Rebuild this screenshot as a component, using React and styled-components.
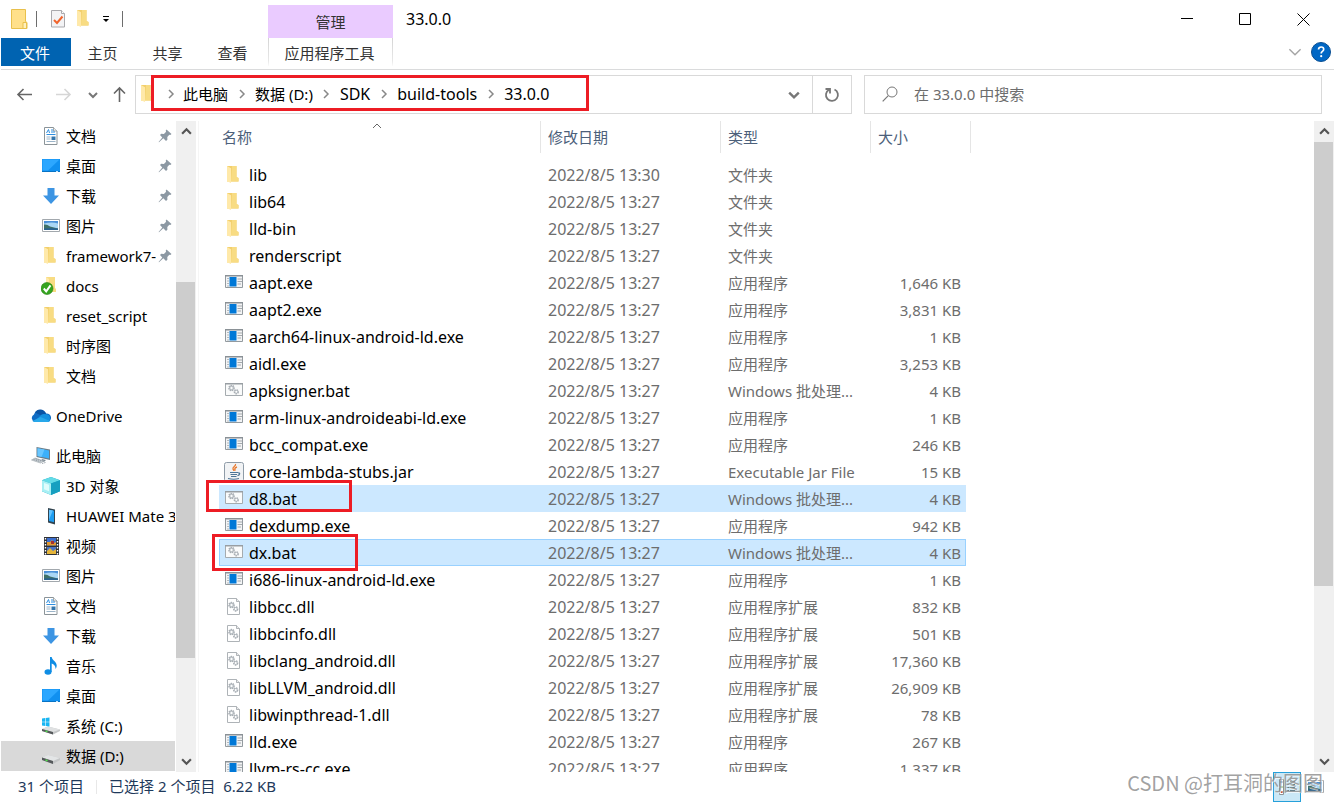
import React from "react";
import styled, { createGlobalStyle } from "styled-components";

const GlobalStyle = createGlobalStyle`
  * {
    box-sizing: border-box;
  }

  body {
    margin: 0;
    background: #fff;
    color: #000;
    font: 15px/20px "Noto Sans", "Noto Sans CJK SC", sans-serif;
  }

  button,
  input {
    font: inherit;
    color: inherit;
  }

  a {
    color: inherit;
    text-decoration: none;
  }

  svg {
    display: block;
    flex: none;
  }
`;

const StyledWindow = styled.div`
  position: relative;
  display: flex;
  flex-direction: column;
  height: 100vh;
  padding: 0 1px;
  overflow: hidden;
`;

const StyledTitleBar = styled.header`
  display: flex;
  height: 38px;
  padding-right: 2px;
`;

const StyledQuickAccess = styled.div`
  display: flex;
  align-items: center;
  width: 267px;
  padding-left: 8px;
`;

const StyledQuickButton = styled.button`
  display: flex;
  align-items: center;
  justify-content: center;
  width: ${(props) => props.$width || 26}px;
  height: 24px;
  padding: 0;
  border: 0;
  background: none;
`;

const StyledQuickDivider = styled.span`
  width: 1px;
  height: 16px;
  margin: 0 8px 0 7px;
  background: #6d6d6d;
`;

const StyledContextGroup = styled.div`
  width: 125px;
  height: 33px;
  margin-top: 5px;
  padding-top: 7px;
  background: #eacbff;
  color: #333;
  text-align: center;
`;

const StyledTitle = styled.h1`
  flex: 1;
  margin: 0;
  padding: 9px 13px;
  font-size: 16px;
  font-weight: 400;
`;

const StyledWindowButton = styled.button`
  display: flex;
  align-items: center;
  justify-content: center;
  width: 58px;
  padding: 0;
  border: 0;
  background: none;
`;

const StyledRibbon = styled.nav`
  display: flex;
  height: 32px;
  padding-bottom: 3px;
  border-bottom: 1px solid #dadbdc;
  color: #333;
`;

const StyledRibbonTab = styled.button`
  width: 65px;
  padding: 2px 2px 0 0;
  border: 0;
  background: none;
  text-align: center;
`;

const StyledFileTab = styled(StyledRibbonTab)`
  width: 70px;
  background: #0063b1;
  color: #fff;
`;

const StyledContextTab = styled(StyledRibbonTab)`
  width: 125px;
  margin-left: 2px;
  border: solid;
  border-width: 0 1px;
  border-image: linear-gradient(#d4d4d4, #e8e8e8 80%, #fff) 1;
`;

const StyledRibbonEnd = styled.div`
  display: flex;
  align-items: center;
  gap: 6px;
  margin-left: auto;
  padding-right: 3px;
`;

const StyledIconButton = styled.button`
  display: flex;
  align-items: center;
  justify-content: center;
  width: ${(props) => props.$width || 20}px;
  height: 100%;
  padding: 0;
  border: 0;
  background: none;
`;

const StyledToolbar = styled.div`
  display: flex;
  height: 51px;
  padding: 5px 12px 7px 3px;
`;

const StyledHistory = styled.div`
  display: flex;
  width: 131px;
`;

const StyledAddress = styled.div`
  display: flex;
  flex: 715;
  border: 1px solid #d9d9d9;
`;

const StyledBreadcrumb = styled.div`
  position: relative;
  display: flex;
  flex: 1;
  align-items: center;
  padding: 0 0 2px 5px;
`;

const StyledCrumb = styled.a`
  font-size: ${(props) => (props.$latin ? 16 : 15)}px;
`;

const StyledChevron = styled.span`
  display: flex;
  justify-content: center;
  width: ${(props) => (props.$first ? 25 : 27)}px;
`;

const StyledMark = styled.span`
  position: absolute;
  z-index: 1;
  border: 3px solid #ed1c24;
  pointer-events: none;
`;

const StyledPathMark = styled(StyledMark)`
  top: -1px;
  left: 15px;
  width: 438px;
  height: 36px;
`;

const StyledRefresh = styled.div`
  width: 39px;
  border-left: 1px solid #d9d9d9;
`;

const StyledSearch = styled.label`
  display: flex;
  flex: 439;
  align-items: center;
  gap: 16px;
  margin-left: 12px;
  padding: 0 0 2px 17px;
  border: 1px solid #d9d9d9;
`;

const StyledSearchInput = styled.input`
  flex: 1;
  min-width: 0;
  padding: 0;
  border: 0;
  outline: 0;
  background: none;

  &::placeholder {
    color: #6d6d6d;
    opacity: 1;
  }
`;

const StyledBody = styled.div`
  display: flex;
  flex: 1;
  min-height: 0;
`;

const StyledSidebar = styled.nav`
  display: flex;
  gap: 1px;
  width: 197px;
  padding-right: 2px;
`;

const StyledTree = styled.ul`
  flex: 1;
  min-width: 0;
  margin: 0;
  padding: 0;
  overflow: hidden;
  list-style: none;
`;

const StyledTreeItem = styled.li`
  margin: ${(props) => (props.$root ? "10px 0 0" : 0)};
  background: ${(props) => (props.$active ? "#d9d9d9" : "none")};
`;

const StyledTreeLink = styled.a`
  display: flex;
  align-items: center;
  gap: 5px;
  height: 30px;
  padding-left: ${(props) => (props.$root ? 30 : 40)}px;
`;

const StyledTreeText = styled.span`
  flex: 1;
  overflow: hidden;
  white-space: nowrap;
`;

const StyledPin = styled.span`
  margin: 0 3px 0 -3px;
`;

const StyledScrollbar = styled.div`
  display: grid;
  grid-template-rows: 21px ${(props) => props.$rows} 20px;
  width: 20px;
  background: #f0f0f0;
`;

const StyledThumb = styled.div`
  grid-row: 3;
  width: 19px;
  background: #cdcdcd;
`;

const StyledScrollButton = styled(StyledIconButton)`
  grid-row: ${(props) => props.$row};
`;

const StyledFiles = styled.main`
  flex: 1;
  min-width: 0;
  padding-left: 20px;
  overflow: hidden;
  border-left: 1px solid #f5f5f5;
`;

const StyledTable = styled.table`
  display: block;
`;

const StyledHead = styled.thead`
  display: block;
  margin-bottom: 8px;
`;

const StyledRows = styled.tbody`
  display: block;
`;

const StyledHeadRow = styled.tr`
  display: grid;
  grid-template-columns: 322px 180px 150px 100px;
`;

const StyledTh = styled.th`
  position: relative;
  height: 32px;
  padding: 6px ${(props) => (props.$name ? 3 : 7)}px;
  border-right: 1px solid #e5e5e5;
  color: #4c607a;
  font-weight: 400;
  text-align: left;
`;

const StyledSort = styled.span`
  position: absolute;
  top: 0;
  left: 153px;
`;

const StyledRow = styled.tr`
  position: relative;
  display: grid;
  grid-template-columns: 322px 180px 150px 95px;
  width: 747px;
  height: 27px;
  background: ${(props) => (props.$selected ? "#cce8ff" : "none")};
  outline: ${(props) => (props.$focused ? "1px solid #99d1ff" : "none")};
  outline-offset: -1px;
`;

const StyledCell = styled.td`
  padding: 4px ${(props) => (props.$size ? 5 : 7)}px 3px;
  color: #6d6d6d;
  font-size: ${(props) => (props.$latin ? 16 : 15)}px;
  text-align: ${(props) => (props.$size ? "right" : "left")};
  white-space: nowrap;
`;

const StyledNameCell = styled.td`
  display: flex;
  gap: 5px;
  padding: 4px 5px 3px;
  font-size: 16px;
  white-space: nowrap;
`;

const StyledRowMark = styled(StyledMark)`
  top: -5px;
  left: ${(props) => (props.$focused ? -7 : -13)}px;
  width: 146px;
  height: ${(props) => (props.$focused ? 37 : 32)}px;
`;

const StyledStatus = styled.footer`
  display: flex;
  align-items: center;
  height: 30px;
  padding: 0 9px 0 17px;
  color: #1e395b;
`;

const StyledStatusText = styled.span`
  padding-bottom: 2px;
`;

const StyledStatusDivider = styled.span`
  width: 1px;
  height: 14px;
  margin: 0 12px;
  background: #e8e8e8;
`;

const StyledViews = styled.div`
  display: flex;
  gap: 4px;
  height: 30px;
  margin-left: auto;
`;

const StyledViewButton = styled(StyledIconButton)`
  width: ${(props) => (props.$active ? 28 : 20)}px;
  border: ${(props) => (props.$active ? "1px solid #26a0da" : "0")};
  background: ${(props) => (props.$active ? "#cbe8f6" : "none")};
`;

const StyledWatermark = styled.span`
  position: absolute;
  right: 12px;
  bottom: 7px;
  color: rgba(145, 145, 145, 0.85);
  font: 20px/24px "Noto Sans CJK SC", sans-serif;
  text-shadow: 1px 1px 0 rgba(255, 255, 255, 0.7);
  pointer-events: none;
`;

const Caret = ({ dir = "down", size = 10, color = "#555", weight = 2 }) => {
  const points = {
    down: "1,3 5,7 9,3",
    up: "1,7 5,3 9,7",
    right: "3,1 7,5 3,9",
  };
  return (
    <svg width={size} height={size} viewBox="0 0 10 10">
      <polyline
        points={points[dir]}
        fill="none"
        stroke={color}
        strokeWidth={weight}
      />
    </svg>
  );
};

const Arrow = ({ turn = 0, color = "#666" }) => (
  <svg width="17" height="17" viewBox="0 0 17 17">
    <path
      d="M16 8.500H2M7.500 3L2 8.500L7.500 14"
      transform={`rotate(${turn} 8.5 8.5)`}
      fill="none"
      stroke={color}
      strokeWidth="1.600"
    />
  </svg>
);

const Gear = ({ x, y, r }) => (
  <g>
    <circle
      cx={x}
      cy={y}
      r={r}
      fill="#d8dce0"
      stroke="#a9afb5"
      strokeWidth="1.400"
      strokeDasharray="1.400 0.800"
    />
    <circle cx={x} cy={y} r={r - 0.6} fill="#cdd2d6" stroke="#a5abb0" strokeWidth="0.600" />
    <circle cx={x} cy={y} r="1" fill="#fff" />
  </g>
);

const drawings = {
  folder: (
    <>
      <path d="M3 1h9.500v11l2 1v3.500H3z" fill="#f2cf6c" />
      <path d="M8 1h4.500v11l2 1v3.500H7z" fill="#f8dc83" />
      <path d="M3 1l4 2.200V18l-4-1.700z" fill="#ffe9a9" />
    </>
  ),
  synced: (
    <>
      <path d="M5 1h9v11l1 1v3H5z" fill="#f8dc83" />
      <path d="M5 1l3 2v14l-3-1z" fill="#ffe9a9" />
      <circle cx="6" cy="12.500" r="6" fill="#36a420" stroke="#23820f" strokeWidth="0.600" />
      <path d="M2.800 12.500l2.400 2.800L9.500 9.300" fill="none" stroke="#fff" strokeWidth="2" />
    </>
  ),
  doc: (
    <>
      <path d="M3.500 1.500h9l3.500 3.500v13.500H3.500z" fill="#fff" stroke="#8b9499" />
      <path d="M12.500 1.500V5H16" fill="#eee" stroke="#8b9499" strokeWidth="0.800" />
      <path d="M5.500 7l2-3.500L8.500 7M10 4h2M10 6h4M5.500 8.500h9" fill="none" stroke="#2d8ee0" />
      <path d="M5.500 11h4M5.500 13h4M5.500 15.500h9" stroke="#9cb5c9" />
      <path d="M10.500 10.500h4V14h-4z" fill="#3476ac" />
    </>
  ),
  desktop: (
    <>
      <path d="M1 3h18v13H1z" fill="#1090f0" />
      <path d="M1.500 3.500h17L7 14.500H1.500z" fill="#2ca7ff" />
      <path d="M1 15h18v1H1z" fill="#0873c4" />
      <path d="M15 15.500h2" stroke="#bfe4ff" />
    </>
  ),
  download: <path d="M6.500 2h7v7.500H18L10 18 2 9.500h4.500z" fill="#3d95e3" />,
  picture: (
    <>
      <path d="M1.500 3.500h17v12h-17z" fill="#fff" stroke="#a2a8ad" />
      <path d="M3 5h14v9H3z" fill="#a9d6f5" />
      <path d="M3 5h14v2.500q-6-2-14 0z" fill="#4a90d8" />
      <path d="M3 8.500q3-.5 6 2l8 2V14H3z" fill="#3f7168" />
      <path d="M3 12.500q6-1 14 0V14H3z" fill="#2a638f" />
    </>
  ),
  cloud: (
    <>
      <path d="M4 16A4 4 0 0 1 3 8.500 6.500 6.500 0 0 1 15 7.500 4 4 0 0 1 16.500 16z" fill="#0f6cc4" />
      <path d="M4 6.500a6 6 0 0 1 11 1.500l-5 1.500z" fill="#0a54a5" />
      <path d="M3 16l7-7q2-1.500 5-.7a4 4 0 0 1 1.500 7.700z" fill="#1490df" />
      <path d="M1.500 15l8-4 9.500 4q-1 1-2.500 1H4q-1.500 0-2.500-1z" fill="#28a8ea" />
    </>
  ),
  computer: (
    <>
      <path d="M5.500 1l13.500 2.500V14L5.500 11z" fill="#6b7d89" />
      <path d="M6.500 2.200l11.500 2.200V12.500l-11.500-2.400z" fill="#3cb0fa" />
      <path d="M6.500 2.200l7 1.300-3 7.400-4-.8z" fill="#68c6ff" />
      <path d="M11 13l4 1-2 2-3-1z" fill="#7f8b94" />
      <path d="M4 12l9 3-3.500 2L.5 14z" fill="#cdd3d7" stroke="#98a1a8" strokeWidth="0.600" />
      <path d="M2.500 13.500l7 2.200M4.500 12.800l7 2.300M11 17.500l3.500-1" stroke="#87919a" strokeWidth="0.800" strokeDasharray="1.500 .7" />
    </>
  ),
  cube: (
    <>
      <path d="M10 1l9 3.300v11L10 19l-9-3.700v-11z" fill="#15a4bd" />
      <path d="M10 1l9 3.300L10 7.500 1 4.300z" fill="#63dbe7" />
      <path d="M1 4.300l9 3.200V19l-9-3.700z" fill="#a7eff4" />
      <path d="M3 7l5 1.800v6.500l-5-2z" fill="#dffcfc" />
      <path d="M10 7.500l9-3.200v11L10 19z" fill="#169fc0" />
    </>
  ),
  phone: (
    <>
      <path d="M7 2l7 1.500v15L7 16.500z" fill="#33444f" />
      <path d="M8 3.700l5 1v11.500L8 15z" fill="#1e9df1" />
      <path d="M8 3.700l4 .8-4 9z" fill="#63c3ff" />
    </>
  ),
  video: (
    <>
      <path d="M3 1h15v18H3z" fill="#2e3137" />
      <path d="M6 2h9v7.500H6z" fill="#3c6fd0" />
      <path d="M6 11h9v7H6z" fill="#4a74c4" />
      <path d="M6 6h3l2-2 2 3 2-1v3.500H6z" fill="#e59b2f" />
      <path d="M6 15l3-3 3 3 3-2v5H6z" fill="#e5b53a" />
      <path d="M10 5h3v3h-3z" fill="#a5302d" />
      <path d="M4.500 2v17M16.500 2v17" stroke="#fff" strokeWidth="1.400" strokeDasharray="1.500 1.500" />
    </>
  ),
  music: (
    <>
      <ellipse cx="7" cy="16" rx="3.500" ry="2.700" fill="#0f8de4" />
      <path d="M9 1h1.700c.5 3.500 5 4.500 5 8.500 0 1.500-.5 2.500-1.200 3.500.3-3-1.500-4.500-3.800-5.500V16H9z" fill="#0f8de4" />
    </>
  ),
  drive: (
    <>
      <path d="M1 11.500l6-2.500 12 3v2l-7 4-11-4z" fill="#c4c6c7" />
      <path d="M1 11.500l6-2.500 12 3-7 3z" fill="#e3e5e6" />
      <path d="M1 11.500l11 3.500v3L1 14z" fill="#55595b" />
      <path d="M4.500 14l2 .7" stroke="#54e34e" strokeWidth="1.500" />
    </>
  ),
  system: (
    <>
      <path d="M1 13l6-2.500 12 3v1.500l-7 3.500-11-3.500z" fill="#c4c6c7" />
      <path d="M1 13l6-2.500 12 3-7 2.500z" fill="#dfe1e2" />
      <path d="M1 13l11 3v2.500L1 15z" fill="#55595b" />
      <path d="M4.500 15l2 .6" stroke="#54e34e" strokeWidth="1.500" />
      <path d="M1 2.500l3.200-.4v3.600H1zM4.800 2l3.700-.5v4.200H4.800zM1 6.300h3.200v3.600L1 9.500zM4.800 6.300h3.700v4.200l-3.700-.5z" fill="#18b5f2" />
    </>
  ),
  exe: (
    <>
      <path d="M1.500 2.500h17v12h-17z" fill="#f3f4f5" stroke="#939a9f" />
      <path d="M1 2h18v1.500H1z" fill="#8a9196" />
      <path d="M5.500 4h7v9.500h-7z" fill="#0078d7" />
      <path d="M3 5.500h2M3 8h2M3 10.500h2M3 13h2" stroke="#b4b9bd" strokeWidth="1" />
      <path d="M13.500 6H18M13.500 8.500H18M13.500 11H17" stroke="#a4a9ad" />
    </>
  ),
  bat: (
    <>
      <path d="M1.500 2.500h17v12h-17z" fill="#fafbfb" stroke="#a5abaf" />
      <path d="M1 2h18v1.500H1z" fill="#989ea3" />
      <Gear x={7.5} y={7} r={2.6} />
      <Gear x={12.3} y={10.8} r={2} />
    </>
  ),
  dll: (
    <>
      <path d="M3.500 1.500h9l3 3v13h-12z" fill="#fff" stroke="#aeb3b7" />
      <path d="M12.500 1.500v3h3" fill="#e9ebec" stroke="#9fa5a9" strokeWidth="0.800" />
      <Gear x={7.5} y={8} r={2.6} />
      <Gear x={11.7} y={12} r={2} />
    </>
  ),
  jar: (
    <>
      <rect x="0.500" y="0.500" width="19" height="19" rx="2" fill="#f1f3f5" stroke="#8e9ba7" />
      <path d="M11.500 2c1 2-3.500 3-2.500 5 .3.800 1 1.200 1 2M13 5c-2 .5-3 2-1.500 3.500" fill="none" stroke="#ea7a2e" strokeWidth="1.300" />
      <path d="M6 10.500h8M6.500 12.500h6.500M7 14.500h5.500M4 16.500q6 1.500 11 0M14 11c2.500-.6 2 2-.5 2.700" fill="none" stroke="#4d7596" strokeWidth="1.200" />
    </>
  ),
};

const Icon = ({ name }) => (
  <svg width="20" height="20" viewBox="0 0 20 20">
    {drawings[name]}
  </svg>
);

const PinIcon = () => (
  <svg width="14" height="14" viewBox="0 0 14 14">
    <path
      d="M8.500.5L13.500 5l-1.200 1-1-.2-2 2.200.1 2.700L8 12 5.300 9.300 1 13.300l-.4-.4 3.700-4.500L2 6l1.200-1.200 2.700.1 2.200-2.200-.4-1z"
      fill="#8c98a3"
    />
  </svg>
);

// latin-only crumbs are set one size up, next to the Chinese ones they look small
const isLatin = (text) => /^[\x20-\x7e]*$/.test(text);

const ribbonTabs = ["主页", "共享", "查看"];

const path = ["此电脑", "数据 (D:)", "SDK", "build-tools", "33.0.0"];

const tree = [
  { icon: "doc", text: "文档", pinned: true },
  { icon: "desktop", text: "桌面", pinned: true },
  { icon: "download", text: "下载", pinned: true },
  { icon: "picture", text: "图片", pinned: true },
  { icon: "folder", text: "framework7-", pinned: true },
  { icon: "synced", text: "docs" },
  { icon: "folder", text: "reset_script" },
  { icon: "folder", text: "时序图" },
  { icon: "folder", text: "文档" },
  { icon: "cloud", text: "OneDrive", root: true },
  { icon: "computer", text: "此电脑", root: true },
  { icon: "cube", text: "3D 对象" },
  { icon: "phone", text: "HUAWEI Mate 30" },
  { icon: "video", text: "视频" },
  { icon: "picture", text: "图片" },
  { icon: "doc", text: "文档" },
  { icon: "download", text: "下载" },
  { icon: "music", text: "音乐" },
  { icon: "desktop", text: "桌面" },
  { icon: "system", text: "系统 (C:)" },
  { icon: "drive", text: "数据 (D:)", active: true },
];

const types = {
  folder: "文件夹",
  exe: "应用程序",
  bat: "Windows 批处理...",
  jar: "Executable Jar File",
  dll: "应用程序扩展",
};

const files = [
  { name: "lib", kind: "folder", time: "13:30" },
  { name: "lib64", kind: "folder" },
  { name: "lld-bin", kind: "folder" },
  { name: "renderscript", kind: "folder" },
  { name: "aapt.exe", kind: "exe", size: "1,646 KB" },
  { name: "aapt2.exe", kind: "exe", size: "3,831 KB" },
  { name: "aarch64-linux-android-ld.exe", kind: "exe", size: "1 KB" },
  { name: "aidl.exe", kind: "exe", size: "3,253 KB" },
  { name: "apksigner.bat", kind: "bat", size: "4 KB" },
  { name: "arm-linux-androideabi-ld.exe", kind: "exe", size: "1 KB" },
  { name: "bcc_compat.exe", kind: "exe", size: "246 KB" },
  { name: "core-lambda-stubs.jar", kind: "jar", size: "15 KB" },
  { name: "d8.bat", kind: "bat", size: "4 KB", selected: true },
  { name: "dexdump.exe", kind: "exe", size: "942 KB" },
  { name: "dx.bat", kind: "bat", size: "4 KB", selected: true, focused: true },
  { name: "i686-linux-android-ld.exe", kind: "exe", size: "1 KB" },
  { name: "libbcc.dll", kind: "dll", size: "832 KB" },
  { name: "libbcinfo.dll", kind: "dll", size: "501 KB" },
  { name: "libclang_android.dll", kind: "dll", size: "17,360 KB" },
  { name: "libLLVM_android.dll", kind: "dll", size: "26,909 KB" },
  { name: "libwinpthread-1.dll", kind: "dll", size: "78 KB" },
  { name: "lld.exe", kind: "exe", size: "267 KB" },
  { name: "llvm-rs-cc.exe", kind: "exe", size: "1,337 KB" },
];

const Scrollbar = ({ rows }) => (
  <StyledScrollbar $rows={rows}>
    <StyledScrollButton $row={1} aria-label="向上滚动">
      <Caret dir="up" size={11} />
    </StyledScrollButton>
    <StyledThumb />
    <StyledScrollButton $row={5} aria-label="向下滚动">
      <Caret size={11} />
    </StyledScrollButton>
  </StyledScrollbar>
);

const TitleBar = () => (
  <StyledTitleBar>
    <StyledQuickAccess>
      <svg width="20" height="22" viewBox="0 0 20 22">
        <path d="M2.500 1.500h14v12l1.500 1v6H2.500z" fill="#ffe08a" stroke="#e8c04c" />
        <path d="M14 14.500h3.500v6H14z" fill="#fff0bd" stroke="#e8c04c" />
      </svg>
      <StyledQuickDivider />
      <StyledQuickButton $width={26} aria-label="属性">
        <svg width="16" height="20" viewBox="0 0 16 20">
          <path d="M1.500 1.500h10l3 3v13.500h-13z" fill="#f3f3f5" stroke="#a9a9ad" />
          <path d="M11.500 1.500v3h3" fill="#fff" stroke="#a9a9ad" />
          <path d="M4 11l3 3 5.500-6.500" fill="none" stroke="#f0642d" strokeWidth="2" />
        </svg>
      </StyledQuickButton>
      <StyledQuickButton aria-label="新建文件夹">
        <Icon name="folder" />
      </StyledQuickButton>
      <StyledQuickButton $width={18} aria-label="自定义快速访问工具栏">
        <svg width="8" height="8" viewBox="0 0 8 8">
          <path d="M1 1.500h6" stroke="#000" />
          <path d="M1 4h6L4 7z" fill="#000" />
        </svg>
      </StyledQuickButton>
      <StyledQuickDivider />
    </StyledQuickAccess>
    <StyledContextGroup>管理</StyledContextGroup>
    <StyledTitle>33.0.0</StyledTitle>
    <StyledWindowButton aria-label="最小化">
      <svg width="13" height="13" viewBox="0 0 13 13">
        <path d="M0 5.500h12" stroke="#000" />
      </svg>
    </StyledWindowButton>
    <StyledWindowButton aria-label="最大化">
      <svg width="13" height="13" viewBox="0 0 13 13">
        <path d="M.5.5h11v11H.5z" fill="none" stroke="#000" />
      </svg>
    </StyledWindowButton>
    <StyledWindowButton aria-label="关闭">
      <svg width="13" height="13" viewBox="0 0 13 13">
        <path d="M.5.5l12 12M12.500.5l-12 12" stroke="#000" />
      </svg>
    </StyledWindowButton>
  </StyledTitleBar>
);

const Ribbon = () => (
  <StyledRibbon>
    <StyledFileTab>文件</StyledFileTab>
    {ribbonTabs.map((tab) => (
      <StyledRibbonTab key={tab}>{tab}</StyledRibbonTab>
    ))}
    <StyledContextTab>应用程序工具</StyledContextTab>
    <StyledRibbonEnd>
      <StyledIconButton aria-label="展开功能区">
        <Caret size={14} color="#a5a5a5" weight={1} />
      </StyledIconButton>
      <StyledIconButton aria-label="帮助">
        <svg width="20" height="20" viewBox="0 0 20 20">
          <circle cx="10" cy="10" r="9.500" fill="#0067c5" stroke="#0a4f92" />
          <path
            d="M7.500 7.500q.2-2.500 2.700-2.500t2.500 2.300q0 1.200-1.300 2.100t-1.200 2.100"
            fill="none"
            stroke="#fff"
            strokeWidth="1.700"
          />
          <circle cx="10.200" cy="14.200" r="1.100" fill="#fff" />
        </svg>
      </StyledIconButton>
    </StyledRibbonEnd>
  </StyledRibbon>
);

const Toolbar = () => (
  <StyledToolbar>
    <StyledHistory>
      <StyledIconButton $width={40} aria-label="返回">
        <Arrow />
      </StyledIconButton>
      <StyledIconButton $width={38} aria-label="前进">
        <Arrow turn={180} color="#d6d6d6" />
      </StyledIconButton>
      <StyledIconButton $width={22} aria-label="最近浏览的位置">
        <Caret color="#777" />
      </StyledIconButton>
      <StyledIconButton $width={30} aria-label="上移">
        <Arrow turn={90} />
      </StyledIconButton>
    </StyledHistory>
    <StyledAddress>
      <StyledBreadcrumb>
        <svg width="17" height="20" viewBox="3 0 17 20">
          {drawings.folder}
        </svg>
        {path.map((part, i) => (
          <React.Fragment key={part}>
            <StyledChevron $first={i === 0}>
              <Caret dir="right" color="#888" weight={1.5} />
            </StyledChevron>
            <StyledCrumb href="#path" $latin={isLatin(part)}>
              {part}
            </StyledCrumb>
          </React.Fragment>
        ))}
        <StyledPathMark />
      </StyledBreadcrumb>
      <StyledIconButton $width={36} aria-label="以前的位置">
        <Caret size={12} color="#777" />
      </StyledIconButton>
      <StyledRefresh>
        <StyledIconButton $width={38} aria-label="刷新">
          <svg width="16" height="16" viewBox="0 0 16 16">
            <path
              d="M10.500 2.500a6 6 0 1 1-5.500.2M1.500 2h4.500v4.500"
              fill="none"
              stroke="#777"
              strokeWidth="1.800"
            />
          </svg>
        </StyledIconButton>
      </StyledRefresh>
    </StyledAddress>
    <StyledSearch>
      <svg width="16" height="16" viewBox="0 0 16 16">
        <circle cx="10" cy="6" r="5" fill="none" stroke="#777" />
        <path d="M6.300 9.700L.7 15.300" stroke="#777" strokeWidth="1.200" />
      </svg>
      <StyledSearchInput
        type="text"
        aria-label="搜索"
        placeholder="在 33.0.0 中搜索"
      />
    </StyledSearch>
  </StyledToolbar>
);

const Sidebar = () => (
  <StyledSidebar>
    <StyledTree>
      {tree.map((item, i) => (
        <StyledTreeItem key={i} $root={item.root} $active={item.active}>
          <StyledTreeLink href="#tree" $root={item.root}>
            <Icon name={item.icon} />
            <StyledTreeText>{item.text}</StyledTreeText>
            {item.pinned && (
              <StyledPin>
                <PinIcon />
              </StyledPin>
            )}
          </StyledTreeLink>
        </StyledTreeItem>
      ))}
    </StyledTree>
    <Scrollbar rows="140fr 375fr 94fr" />
  </StyledSidebar>
);

const FileTable = () => (
  <StyledFiles>
    <StyledTable>
      <StyledHead>
        <StyledHeadRow>
          <StyledTh $name>
            名称
            <StyledSort>
              <Caret dir="up" color="#666" weight={1} />
            </StyledSort>
          </StyledTh>
          <StyledTh>修改日期</StyledTh>
          <StyledTh>类型</StyledTh>
          <StyledTh>大小</StyledTh>
        </StyledHeadRow>
      </StyledHead>
      <StyledRows>
        {files.map((file) => (
          <StyledRow
            key={file.name}
            $selected={file.selected}
            $focused={file.focused}
          >
            <StyledNameCell>
              <Icon name={file.kind} />
              {file.name}
              {file.selected && <StyledRowMark $focused={file.focused} />}
            </StyledNameCell>
            <StyledCell $latin>2022/8/5 {file.time || "13:27"}</StyledCell>
            <StyledCell>{types[file.kind]}</StyledCell>
            <StyledCell $size>{file.size}</StyledCell>
          </StyledRow>
        ))}
      </StyledRows>
    </StyledTable>
  </StyledFiles>
);

const StatusBar = () => (
  <StyledStatus>
    <StyledStatusText>31 个项目</StyledStatusText>
    <StyledStatusDivider />
    <StyledStatusText>已选择 2 个项目&nbsp; 6.22 KB</StyledStatusText>
    <StyledViews>
      <StyledViewButton $active aria-label="详细信息">
        <svg width="18" height="18" viewBox="0 0 18 18">
          <path d="M1.500 1.500h4v15h-4z" fill="#fff" stroke="#8b9499" />
          <path d="M2.500 4h2" stroke="#3476ac" strokeWidth="2" />
          <path d="M2.500 9h2" stroke="#4d9b58" strokeWidth="2" />
          <path d="M2.500 14h2" stroke="#a5302d" strokeWidth="2" />
          <path d="M8 3.500h3M12 3.500h5M8 6.500h3M12 6.500h5M8 9.500h3M12 9.500h5M8 12.500h3M12 12.500h5" stroke="#5b7f8c" />
        </svg>
      </StyledViewButton>
      <StyledViewButton aria-label="大缩略图">
        <Icon name="picture" />
      </StyledViewButton>
    </StyledViews>
  </StyledStatus>
);

const App = () => {
  return (
    <StyledWindow>
      <GlobalStyle />
      <TitleBar />
      <Ribbon />
      <Toolbar />
      <StyledBody>
        <Sidebar />
        <FileTable />
        <Scrollbar rows="0fr 443fr 166fr" />
      </StyledBody>
      <StatusBar />
      <StyledWatermark>CSDN @打耳洞的图图</StyledWatermark>
    </StyledWindow>
  );
};

export default App;
